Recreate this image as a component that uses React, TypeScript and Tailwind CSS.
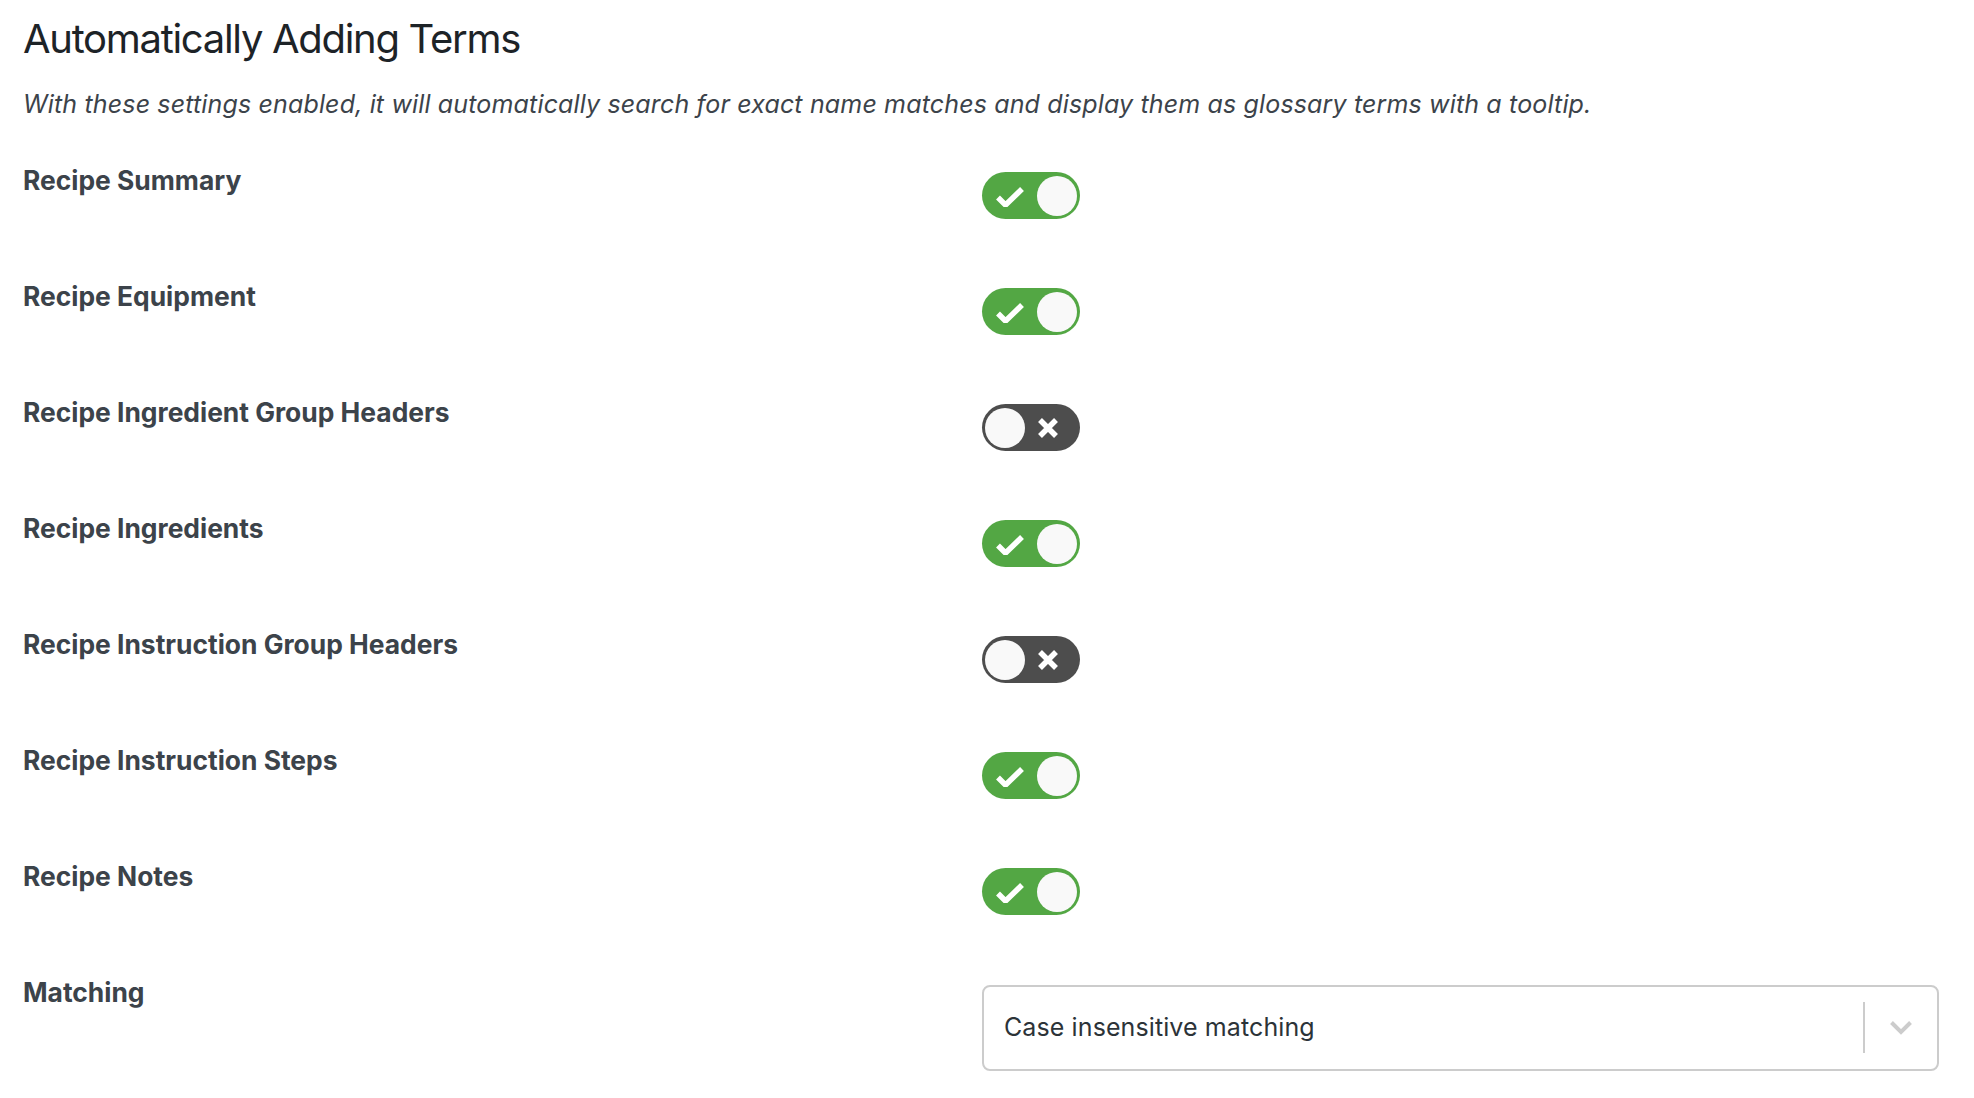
import { type ReactNode } from 'react';

const rows: { label: string; on: boolean }[] = [
  { label: 'Recipe Summary', on: true },
  { label: 'Recipe Equipment', on: true },
  { label: 'Recipe Ingredient Group Headers', on: false },
  { label: 'Recipe Ingredients', on: true },
  { label: 'Recipe Instruction Group Headers', on: false },
  { label: 'Recipe Instruction Steps', on: true },
  { label: 'Recipe Notes', on: true },
];

function Toggle({ on }: { on: boolean }) {
  if (on) {
    return (
      <div className="relative flex h-[47px] w-[98px] items-center justify-end rounded-full bg-[#53a744] px-[3px]">
        <svg className="absolute left-[14px] top-[14px]" width="28" height="21" viewBox="0 0 28 21" fill="none">
          <path d="M2 11.5 L9.5 19 L26 3" stroke="#fff" strokeWidth="5.5" />
        </svg>
        <div className="h-[40px] w-[40px] rounded-full bg-[#f9f9f9]" />
      </div>
    );
  }
  return (
    <div className="relative flex h-[47px] w-[98px] items-center rounded-full bg-[#4d4d4d] px-[3px]">
      <div className="h-[40px] w-[40px] rounded-full bg-[#f9f9f9]" />
      <svg className="absolute right-[21px] top-[12.5px]" width="22" height="22" viewBox="0 0 22 22" fill="none">
        <path d="M3 3 L19 19 M19 3 L3 19" stroke="#fff" strokeWidth="5.5" />
      </svg>
    </div>
  );
}

function Row({ label, children }: { label: string; children: ReactNode }) {
  return (
    <div className="flex h-[116px]">
      <div className="w-[959px] shrink-0 text-[26.4px] font-bold leading-[33px] text-[#3c434a]">{label}</div>
      <div className="pt-[8.5px]">{children}</div>
    </div>
  );
}

export default function App() {
  return (
    <main className="min-h-screen bg-white px-[23px] pt-[15px] font-['Inter',sans-serif]">
      <h2 className="text-[40px] font-normal leading-[48px] tracking-[-1.3px] text-[#1d2327]">Automatically Adding Terms</h2>
      <p className="mt-[27px] text-[25px] italic leading-[29px] tracking-[0.15px] text-[#3c434a]">
        With these settings enabled, it will automatically search for exact name matches and display them as glossary terms with a tooltip.
      </p>

      <div className="mt-[44.5px]">
        {rows.map((row) => (
          <Row key={row.label} label={row.label}>
            <Toggle on={row.on} />
          </Row>
        ))}

        <div className="flex">
          <div className="w-[959px] shrink-0 text-[26.4px] font-bold leading-[33px] text-[#3c434a]">Matching</div>
          <div className="mt-[9px] flex h-[86px] w-[957px] items-center rounded-[8px] border-2 border-[#cccccc] bg-white">
            <span className="flex-1 pl-[20px] text-[25px] tracking-[0.1px] text-[#2c3338]">Case insensitive matching</span>
            <div className="h-[51px] w-[2px] bg-[#cccccc]" />
            <div className="flex w-[72px] items-center justify-center">
              <svg width="24" height="15" viewBox="0 0 24 15" fill="none">
                <path d="M2.5 2.5 L12 12 L21.5 2.5" stroke="#cccccc" strokeWidth="4" />
              </svg>
            </div>
          </div>
        </div>
      </div>
    </main>
  );
}
